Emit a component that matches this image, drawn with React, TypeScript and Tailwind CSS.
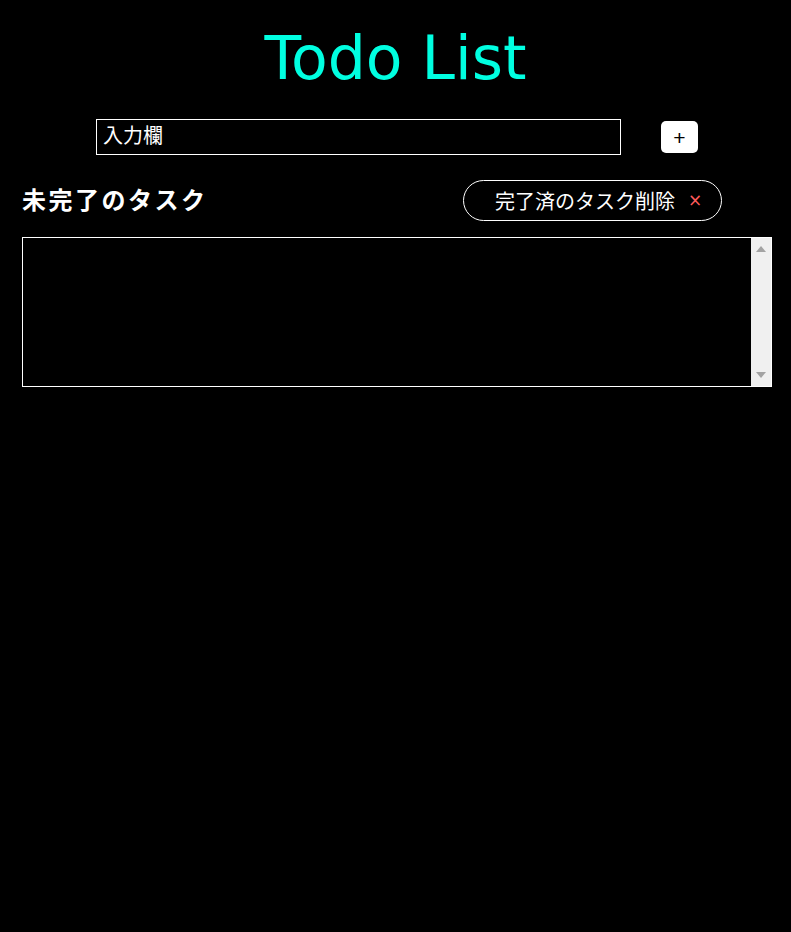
import React, { useState } from "react";

const App = () => {
  const [text, setText] = useState("");

  return (
    <div className="min-h-[932px] w-full bg-black text-white [font-family:'Noto_Sans_CJK_JP',sans-serif]">
      <h1 className="pt-[14px] text-center text-[60px] leading-[88px] text-[#00ffe1] [font-family:'DejaVu_Sans',sans-serif]">
        Todo List
      </h1>
      <div className="mt-[17px] flex items-center">
        <input
          value={text}
          onChange={(e) => setText(e.target.value)}
          placeholder="入力欄"
          className="ml-[96px] h-[36px] w-[525px] border border-white bg-black px-[6px] pb-[6px] text-[20px] leading-[28px] text-white outline-none placeholder:text-white"
        />
        <button
          type="button"
          className="ml-[40px] flex h-[32px] w-[37px] items-center justify-center rounded-[5px] bg-white text-[21px] leading-none text-black [font-family:'Liberation_Sans',sans-serif]"
        >
          +
        </button>
      </div>
      <div className="mt-[25px] flex items-center">
        <h2 className="ml-[22px] w-[187px] -translate-y-[2px] text-[24px] font-bold leading-none tracking-[2.5px]">
          未完了のタスク
        </h2>
        <button
          type="button"
          className="ml-[254px] flex h-[41px] w-[259px] items-center rounded-full border border-white pl-[31px] text-[20px]"
        >
          完了済のタスク削除
          <span className="ml-[13px] text-[17px] text-[#ff5a5a] [font-family:'DejaVu_Sans',sans-serif]">
            ×
          </span>
        </button>
      </div>
      <div className="ml-[22px] mt-[16px] flex h-[150px] w-[750px] border border-white">
        <div className="flex-1" />
        <div className="flex w-[20px] flex-col items-center justify-between bg-[#f0f0f0] py-[8px]">
          <svg width="10" height="6" viewBox="0 0 10 6">
            <path d="M0 6 L5 0 L10 6 Z" fill="#a3a3a3" />
          </svg>
          <svg width="10" height="6" viewBox="0 0 10 6">
            <path d="M0 0 L5 6 L10 0 Z" fill="#a3a3a3" />
          </svg>
        </div>
      </div>
    </div>
  );
};

export default App;
